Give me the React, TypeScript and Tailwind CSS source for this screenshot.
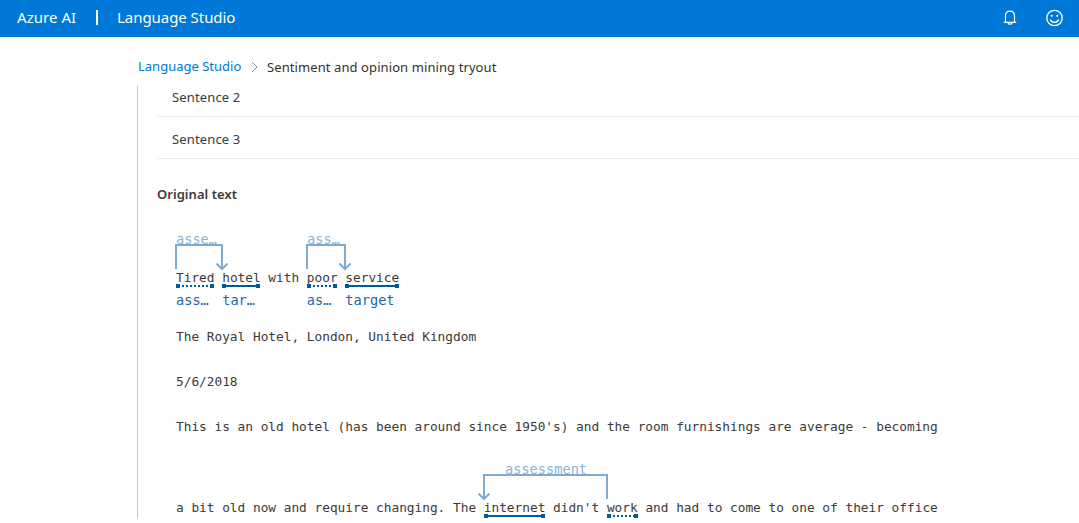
import React from "react";

type WordProps = {
  text: string;
  width: number;
  dotted?: boolean;
  label?: string;
};

function Word({ text, width, dotted, label }: WordProps) {
  return (
    <span className="relative inline-block leading-[20px]">
      {text}
      <svg
        className="absolute left-0 top-[16px]"
        width={width}
        height={4}
        shapeRendering="crispEdges"
      >
        <line
          x1={dotted ? 6 : 2}
          y1={2}
          x2={width - 2}
          y2={2}
          stroke="#005a9e"
          strokeWidth={2}
          strokeDasharray={dotted ? "2 2" : undefined}
        />
        <rect x={0} y={0} width={4} height={4} fill="#005a9e" />
        <rect x={width - 4} y={0} width={4} height={4} fill="#005a9e" />
      </svg>
      {label && (
        <span className="absolute left-0 top-[22px] whitespace-pre text-[13.6px] tracking-[0.02px] text-[#1767a6]">
          {label}
        </span>
      )}
    </span>
  );
}

type RelationProps = {
  width: number;
  label: string;
  labelClass: string;
  className: string;
  reverse?: boolean;
};

function Relation({ width, label, labelClass, className, reverse }: RelationProps) {
  const start = 7;
  const end = width + 7;
  const tip = reverse ? start : end;
  return (
    <span className={`absolute ${className}`}>
      <span
        className={`absolute top-0 whitespace-pre text-[13.6px] leading-[18px] tracking-[0.02px] text-[#8cb4d6] ${labelClass}`}
      >
        {label}
      </span>
      <svg
        className="absolute left-[-7px] top-[13px]"
        width={width + 14}
        height={28}
        fill="none"
        stroke="#7fabd0"
        strokeWidth={2}
      >
        <path d={`M${start} 26V2H${end}V26`} />
        <path d={`M${tip - 5.5} 20.5L${tip} 26L${tip + 5.5} 20.5`} />
      </svg>
    </span>
  );
}

export default function App() {
  return (
    <div className="flex h-[523px] w-[1079px] flex-col overflow-hidden bg-white font-['Segoe_UI','Noto_Sans',sans-serif] text-[#3b3a39]">
      <header className="flex h-[37px] shrink-0 items-center bg-[#0078d7] pb-[2px] pl-[17px] pr-[16px] text-[15px] text-white">
        <span className="w-[79px] whitespace-nowrap tracking-[0.05px]">Azure AI</span>
        <span className="h-[15px] w-[2px] bg-white" />
        <span className="ml-[19px] whitespace-nowrap tracking-[-0.05px]">Language Studio</span>
        <svg className="ml-auto" width="14" height="16" viewBox="0 0 14 16" fill="none" stroke="white" strokeWidth="1.2">
          <path d="M2.5 12.2V6C2.5 3 4.3 1.1 7 1.1S11.5 3 11.5 6V12.2" />
          <path d="M.8 12.4H13.2M5 12.6C5.3 14.8 8.7 14.8 9 12.6" />
        </svg>
        <svg className="ml-[28px]" width="18" height="18" viewBox="0 0 18 18" fill="none" stroke="white" strokeWidth="1.3">
          <circle cx="9.5" cy="9" r="7.7" />
          <path d="M5.2 10.6C6.9 14.2 12.1 14.2 13.8 10.6" />
          <circle cx="6.7" cy="6.8" r="1.1" fill="white" stroke="none" />
          <circle cx="12.3" cy="6.8" r="1.1" fill="white" stroke="none" />
        </svg>
      </header>

      <nav className="flex h-[49px] shrink-0 items-center pl-[138px] pt-[10px] text-[13px]">
        <span className="w-[112px] whitespace-nowrap text-[#0078d4]">Language Studio</span>
        <svg width="9" height="12" fill="none" stroke="#8a8886" strokeWidth="1">
          <path d="M2 1L7 6L2 11" />
        </svg>
        <span className="ml-[8px] whitespace-nowrap pt-[2px] tracking-[0.09px] text-[#323130]">Sentiment and opinion mining tryout</span>
      </nav>

      <main className="ml-[137px] h-[432px] shrink-0 overflow-hidden border-l border-[#c8c6c4] pl-[19px]">
        <div className="flex h-[31px] items-center border-b border-[#edebe9] pb-[7px] pl-[15px] text-[13px] tracking-[0.14px]">
          Sentence 2
        </div>
        <div className="flex h-[42px] items-center border-b border-[#edebe9] pl-[15px] pt-[4px] text-[13px] tracking-[0.14px]">
          Sentence 3
        </div>
        <h2 className="mt-[25px] text-[13px] font-semibold leading-[20px] tracking-[0.04px]">Original text</h2>

        <div className="pl-[19px] font-['DejaVu_Sans_Mono',monospace] text-[12.8px] leading-[20px] tracking-[-0.01px]">
          <div className="relative mt-[64px] h-[20px] whitespace-pre">
            <Relation className="left-0 top-[-38px]" width={46} label="asse…" labelClass="left-0" />
            <Relation className="left-[131px] top-[-38px]" width={38} label="ass…" labelClass="left-0" />
            <Word text="Tired" width={38} dotted label="ass…" />{" "}
            <Word text="hotel" width={38} label="tar…" />{" with "}
            <Word text="poor" width={30} dotted label="as…" />{" "}
            <Word text="service" width={54} label="target" />
          </div>
          <p className="mt-[39px] whitespace-pre">The Royal Hotel, London, United Kingdom</p>
          <p className="mt-[25px] whitespace-pre">5/6/2018</p>
          <p className="mt-[25px] whitespace-pre">
            This is an old hotel (has been around since 1950's) and the room furnishings are average - becoming
          </p>
          <div className="relative mt-[61px] h-[20px] whitespace-pre">
            <Relation className="left-[308px] top-[-38px]" width={123} label="assessment" labelClass="left-[21px]" reverse />
            {"a bit old now and require changing. The "}
            <Word text="internet" width={61} />
            {" didn't "}
            <Word text="work" width={31} dotted />
            {" and had to come to one of their office"}
          </div>
        </div>
      </main>
    </div>
  );
}
